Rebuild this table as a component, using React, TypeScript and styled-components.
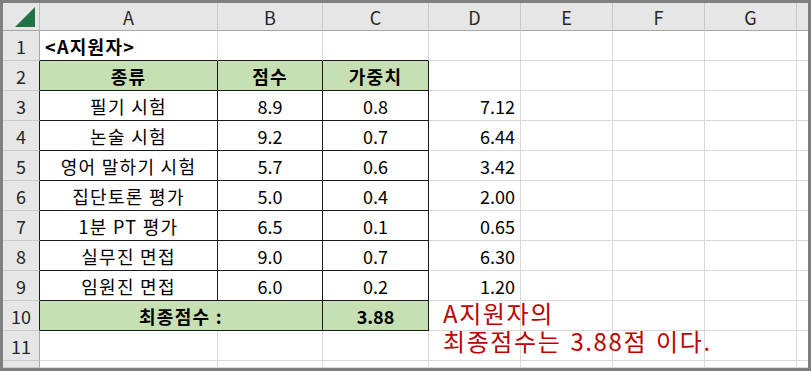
import styled, { createGlobalStyle } from "styled-components";

const GlobalStyle = createGlobalStyle`
  html, body {
    margin: 0;
    padding: 0;
    background: #ffffff;
  }
  body {
    font-family: "Noto Sans CJK KR", "Noto Sans", sans-serif;
  }
`;

type Line = "grid" | "black" | "head";
type Align = "left" | "center" | "right";

const lineColor = (l: Line) =>
  l === "black" ? "#1a1a1a" : l === "head" ? "#a6a6a6" : "#d9d9d9";

const COLS = ["A", "B", "C", "D", "E", "F", "G"];

// A..C is the bordered table, D holds the weighted scores
const rows: { a: string; b: string; c: string; d: string }[] = [
  { a: "필기 시험", b: "8.9", c: "0.8", d: "7.12" },
  { a: "논술 시험", b: "9.2", c: "0.7", d: "6.44" },
  { a: "영어 말하기 시험", b: "5.7", c: "0.6", d: "3.42" },
  { a: "집단토론 평가", b: "5.0", c: "0.4", d: "2.00" },
  { a: "1분 PT 평가", b: "6.5", c: "0.1", d: "0.65" },
  { a: "실무진 면접", b: "9.0", c: "0.7", d: "6.30" },
  { a: "임원진 면접", b: "6.0", c: "0.2", d: "1.20" },
];

const App = () => {
  return (
    <>
      <GlobalStyle />
      <Frame>
        <Sheet>
          <Corner>
            <svg width="22" height="22" viewBox="0 0 22 22">
              <polygon points="21,1 21,21 1,21" fill="#217346" />
            </svg>
          </Corner>
          {COLS.map((c) => (
            <ColHead key={c}>{c}</ColHead>
          ))}
          <ColHead $last />

          {/* row 1 */}
          <RowHead>1</RowHead>
          <Cell $bottom="black" $align="left" $bold $ko $overflow>
            &lt;A지원자&gt;
          </Cell>
          <Cell $bottom="black" />
          <Cell $bottom="black" />
          <Cell />
          <Cell />
          <Cell />
          <Cell />
          <Cell $last />

          {/* row 2 */}
          <RowHead $right="black">2</RowHead>
          <Cell $right="black" $bottom="black" $fill $bold $ko>
            종류
          </Cell>
          <Cell $right="black" $bottom="black" $fill $bold $ko>
            점수
          </Cell>
          <Cell $right="black" $bottom="black" $fill $bold $ko>
            가중치
          </Cell>
          <Cell />
          <Cell />
          <Cell />
          <Cell />
          <Cell $last />

          {rows.map((r, i) => (
            <Row key={r.a} n={i + 3} {...r} />
          ))}

          {/* row 10 */}
          <RowHead $right="black">10</RowHead>
          <Cell $span={2} $right="black" $bottom="black" $fill $bold $ko>
            최종점수 :
          </Cell>
          <Cell $right="black" $bottom="black" $fill $bold>
            3.88
          </Cell>
          <Cell />
          <Cell />
          <Cell />
          <Cell />
          <Cell $last />

          {/* row 11 */}
          <RowHead>11</RowHead>
          {COLS.map((c) => (
            <Cell key={c} />
          ))}
          <Cell $last />

          {/* cut-off row 12 */}
          <RowHead />
          {COLS.map((c) => (
            <Cell key={c} />
          ))}
          <Cell $last />
        </Sheet>

        <Note>
          A지원자의
          <br />
          최종점수는 3.88점 이다.
        </Note>
      </Frame>
    </>
  );
};

const Row = ({ n, a, b, c, d }: { n: number; a: string; b: string; c: string; d: string }) => (
  <>
    <RowHead $right="black">{n}</RowHead>
    <Cell $right="black" $bottom="black" $ko>
      {a}
    </Cell>
    <Cell $right="black" $bottom="black">
      {b}
    </Cell>
    <Cell $right="black" $bottom="black">
      {c}
    </Cell>
    <Cell $align="right">{d}</Cell>
    <Cell />
    <Cell />
    <Cell />
    <Cell $last />
  </>
);

export default App;

const Frame = styled.div`
  position: relative;
  width: 811px;
  height: 371px;
  box-sizing: border-box;
  border: 3px solid #7f7f7f;
  background: #ffffff;
  overflow: hidden;
`;

const Sheet = styled.div`
  display: grid;
  grid-template-columns: 37px 178px 105px 106px 92px 92px 92px 92px 1fr;
  grid-template-rows: 28px repeat(11, 30px) 1fr;
  width: 100%;
  height: 100%;
  font-size: 18px;
  color: #000;
`;

const Corner = styled.div`
  background: #e6e6e6;
  border-right: 1px solid #bdbdbd;
  border-bottom: 1px solid #a6a6a6;
  box-sizing: border-box;
  display: flex;
  align-items: flex-end;
  justify-content: flex-end;
  padding: 0 3px 2px 0;
`;

const ColHead = styled.div<{ $last?: boolean }>`
  background: #e6e6e6;
  border-right: ${(p) => (p.$last ? "none" : "1px solid #c8c8c8")};
  border-bottom: 1px solid #a6a6a6;
  box-sizing: border-box;
  display: flex;
  align-items: center;
  justify-content: center;
  font-size: 18px;
  color: #262626;
  padding-top: 1px;
`;

const RowHead = styled.div<{ $right?: Line }>`
  background: #e6e6e6;
  border-right: 1px solid ${(p) => lineColor(p.$right ?? "head")};
  border-bottom: 1px solid #c8c8c8;
  box-sizing: border-box;
  display: flex;
  align-items: center;
  justify-content: center;
  font-size: 18px;
  color: #262626;
`;

const Cell = styled.div<{
  $right?: Line;
  $bottom?: Line;
  $align?: Align;
  $bold?: boolean;
  $fill?: boolean;
  $span?: number;
  $overflow?: boolean;
  $last?: boolean;
  $ko?: boolean;
}>`
  grid-column: span ${(p) => p.$span ?? 1};
  box-sizing: border-box;
  border-right: ${(p) => (p.$last ? "none" : `1px solid ${lineColor(p.$right ?? "grid")}`)};
  border-bottom: 1px solid ${(p) => lineColor(p.$bottom ?? "grid")};
  background: ${(p) => (p.$fill ? "#c6e0b4" : "#ffffff")};
  display: flex;
  align-items: center;
  justify-content: ${(p) =>
    p.$align === "left" ? "flex-start" : p.$align === "right" ? "flex-end" : "center"};
  padding: 0 5px;
  font-weight: ${(p) => (p.$bold ? 700 : 400)};
  letter-spacing: ${(p) => (p.$ko ? "1.3px" : "0")};
  white-space: nowrap;
  overflow: ${(p) => (p.$overflow ? "visible" : "hidden")};
  position: relative;
  z-index: ${(p) => (p.$overflow ? 1 : 0)};
`;

const Note = styled.div`
  position: absolute;
  left: 440px;
  top: 296px;
  font-size: 24px;
  line-height: 28px;
  letter-spacing: 1.6px;
  word-spacing: 2px;
  color: #c00000;
  white-space: nowrap;
  z-index: 2;
`;
